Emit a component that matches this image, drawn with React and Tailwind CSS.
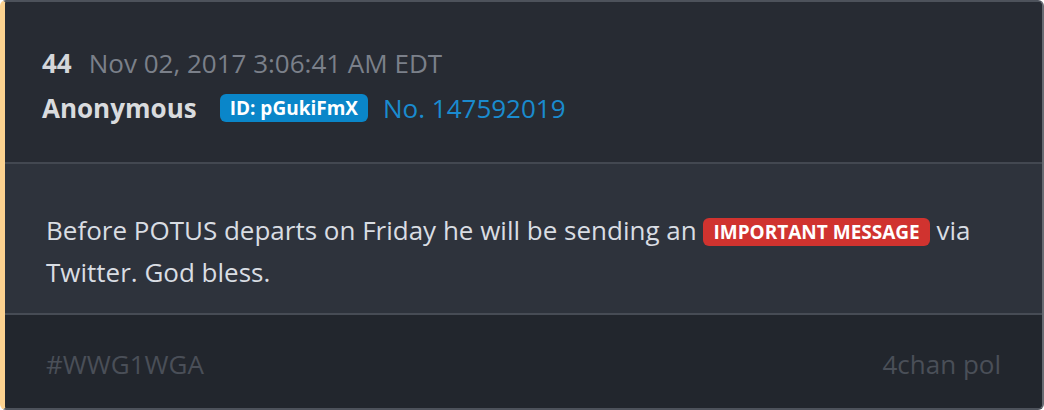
export default function App() {
  return (
    <div className="w-[1044px] h-[410px] bg-white" style={{ fontFamily: '"Open Sans", sans-serif' }}>
      <div className="w-full h-full flex flex-col overflow-hidden rounded-[6px] border-t-2 border-r-2 border-b-2 border-l-[5px] border-t-[#4d525b] border-r-[#676b72] border-b-[#4d525b] border-l-[#fcd290] bg-[#272b33]">
        <div className="h-[162px] shrink-0 bg-[#272b33] pl-[37px] pr-[41px] pt-[45px] flex flex-col gap-[13px] border-b-[2px] border-[#434851]">
          <div className="flex items-center h-[32px] text-[26px] leading-[32px]">
            <span className="font-bold text-[#d4d6da]">44</span>
            <span className="ml-[17px] text-[#7b808a]">Nov 02, 2017 3:06:41 AM EDT</span>
          </div>
          <div className="flex items-center h-[32px] text-[26px] leading-[32px]">
            <span className="font-bold text-[#d9dbde]">Anonymous</span>
            <span className="ml-[23px] h-[28px] px-[10px] rounded-[6px] bg-[#0a86c9] text-white font-bold text-[19px] leading-[28px]">ID: pGukiFmX</span>
            <span className="ml-[15px] text-[#1a8bcf]">No. 147592019</span>
          </div>
        </div>
        <div className="h-[151px] shrink-0 bg-[#2e333c] pl-[41px] pr-[41px] pt-[45px] border-b-[2px] border-[#474c55]">
          <p className="text-[26px] leading-[42px] text-[#d9dde3]">
            Before POTUS departs on Friday he will be sending an{" "}
            <span className="inline-block h-[28px] px-[10px] rounded-[6px] bg-[#d0332f] text-white font-bold text-[19px] leading-[28px] align-[1px]">IMPORTANT MESSAGE</span>{" "}
            via Twitter. God bless.
          </p>
        </div>
        <div className="flex-1 bg-[#22262d] pl-[41px] pr-[41px] flex items-center justify-between text-[26px] leading-[32px] text-[#4a4f58] pt-[4px]">
          <span>#WWG1WGA</span>
          <span>4chan pol</span>
        </div>
      </div>
    </div>
  );
}
